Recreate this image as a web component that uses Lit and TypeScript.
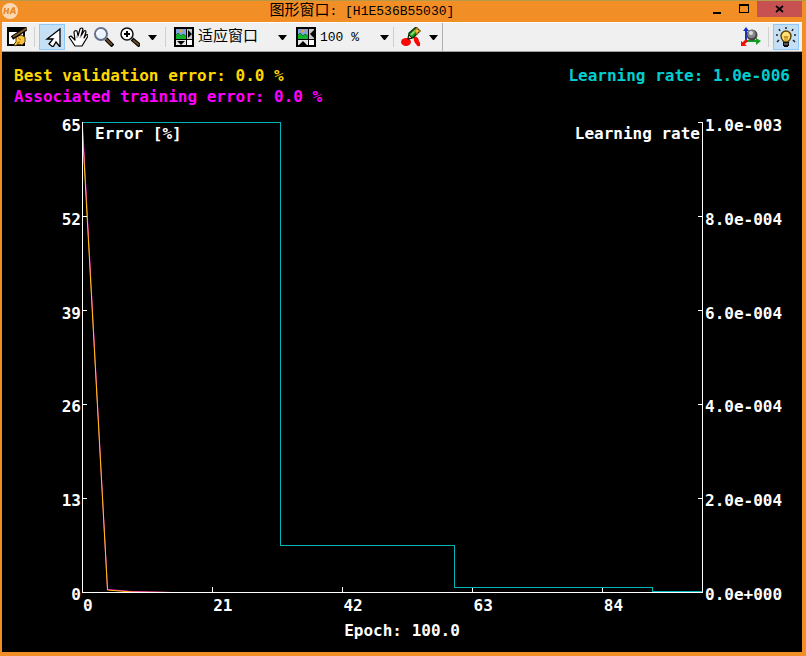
import { LitElement, html, svg, css } from "lit";
import { customElement, state } from "lit/decorators.js";

const errorTicks = ["65", "52", "39", "26", "13", "0"];
const rateTicks = ["1.0e-003", "8.0e-004", "6.0e-004", "4.0e-004", "2.0e-004", "0.0e+000"];
const epochTicks = ["0", "21", "42", "63", "84"];

const logo = svg`
  <circle cx="8" cy="8" r="8" fill="#f9d9b4"/>
  <path d="M3 5l-1 6M6.500 5l-1 6M2.500 8h3.500M8 11l3-6h1l1 6M9.500 9h3" fill="none" stroke="#ea8a2c" stroke-width="1.700"/>`;

const editIcon = svg`
  <rect width="18" height="19" fill="#000"/>
  <rect x="2" y="5" width="14" height="12" fill="#fff"/>
  <path d="M9 10l5-2 4 2v5l-3 3-4-1-3 2-1-2 2-2z" fill="#f8c440" stroke="#5a3c08" stroke-width="1"/>
  <path d="M11 11l3 2M10 16l3-1" stroke="#a86a10" fill="none"/>
  <path d="M20 1L5 11" stroke="#000" stroke-width="4"/>
  <path d="M20 1L6 10" stroke="#80582c" stroke-width="2"/>`;

const pointerIcon = svg`
  <path d="M18 2L5 12h6l-4 5 4 3 3-5 4 5z" fill="#fff" stroke="#000" stroke-width="1.300"/>`;

const handIcon = svg`
  <path d="M1 10l2-1 4 4-1-8q1-2 3-1l1 5 2-7q2-2 3 0l-2 7 3-5q2-1 2 1l-2 6 2-3q2-1 2 1l-3 5-3 5H7l-2-3z"
    fill="#fff" stroke="#000" stroke-width="1.200" stroke-linejoin="round"/>
  <path d="M9 11V8M12 11l1-3" stroke="#888" fill="none"/>`;

const lensIcon = svg`
  <path d="M12 12l7 7" stroke="#000" stroke-width="4"/>
  <path d="M12 12l6 6" stroke="#6a4a22" stroke-width="2"/>
  <circle cx="7" cy="7" r="6" fill="#eaf4fc" stroke="#66728c" stroke-width="2"/>
  <path d="M3 7q0-4 4-4" stroke="#fff" fill="none" stroke-width="1.500"/>`;

const lensPlusIcon = svg`
  <path d="M12 12l8 7" stroke="#000" stroke-width="4"/>
  <path d="M13 13l6 5" stroke="#6a4a22" stroke-width="2"/>
  <circle cx="7" cy="7" r="6" fill="#fff" stroke="#111" stroke-width="1.500"/>
  <path d="M4 7h6M7 4v6" stroke="#000" stroke-width="2"/>`;

const picture = svg`
  <rect width="20" height="20" fill="#000"/>
  <rect x="2" y="2" width="10" height="10" fill="#7fa3dc"/>
  <rect x="13" y="2" width="5" height="10" fill="#c9c9c9"/>
  <rect x="2" y="13" width="10" height="5" fill="#e6e6e6"/>
  <rect x="13" y="13" width="5" height="5" fill="#fff"/>
  <circle cx="7" cy="4" r="1.600" fill="#f0a030"/>
  <path d="M2 8l2-2 3 3 2-2 3 2v3H2z" fill="#10b428"/>
  <path d="M2 8l2-2 3 3 2-2 3 2" stroke="#086018" stroke-width=".7" fill="none"/>`;

const fitIcon = svg`${picture}<path d="M14 3v8l4-4zM3 14h8l-4 4z" fill="#000"/>`;
const scaleIcon = svg`${picture}<path d="M18 3v8l-4-4zM3 18h8l-4-4z" fill="#000"/>`;

const paintIcon = svg`
  <ellipse cx="5" cy="15" rx="5" ry="4" fill="#fa0808"/>
  <path d="M13 10q4-1 5 4 2 2 1 5-3 1-4-2-3-3-2-7z" fill="#fa0808"/>
  <path d="M7 12l1-6 7-6 4 4-7 7z" fill="#168a20" stroke="#0a2a08" stroke-width="1.200"/>
  <path d="M10 8l5-5" stroke="#8ae060" stroke-width="2"/>
  <path d="M7 12l1-4 3 3z" fill="#f0d8a0" stroke="#000" stroke-width=".8"/>
  <path d="M16 0l1 3 3 1-3 1-1 3-1-3-2-1 2-1z" fill="#ffc040" stroke="#b06808" stroke-width=".5"/>`;

const axesIcon = svg`
  <path d="M5 14V2" stroke="#1430c8" stroke-width="2"/>
  <path d="M2 4l3-4 3 4z" fill="#1430c8"/>
  <path d="M5 14h11" stroke="#10a020" stroke-width="2"/>
  <path d="M15 11l5 3-5 4z" fill="#10a020"/>
  <path d="M6 13l-4 4" stroke="#f01010" stroke-width="3"/>
  <path d="M0 14l6 5H0z" fill="#f01010"/>
  <circle cx="11" cy="8" r="5.500" fill="#484848"/>
  <circle cx="10.500" cy="7" r="4" fill="#888"/>
  <circle cx="10" cy="6" r="2" fill="#ddd"/>`;

const bulbIcon = svg`
  <path d="M10 0v2M3 2l1 2M17 2l-1 2M0 8h2M18 8h2M1 15l2-2M19 15l-2-2" stroke="#222" stroke-width="1.500"/>
  <path d="M10 4a5 5 0 0 0-5 5q0 3 3 6h4q3-3 3-6a5 5 0 0 0-5-5z" fill="#ffe070" stroke="#5a4208" stroke-width="1.500"/>
  <path d="M8 9l1 2 1-2 1 2 1-2M9 11v3M11 11v3" stroke="#c08010" fill="none"/>
  <rect x="7" y="15" width="6" height="4" fill="#111"/>
  <path d="M8 19.500h4" stroke="#111"/>
  <path d="M8 17h4" stroke="#999"/>`;

const icon = (shape: unknown) =>
  html`<svg class="icon" viewBox="0 0 20 20" aria-hidden="true">${shape}</svg>`;
const arrow = html`<svg class="arrow" viewBox="0 0 9 5" aria-hidden="true"><path d="M0 0h9L5 5H4z"/></svg>`;

@customElement("training-chart")
export class TrainingChart extends LitElement {
  static styles = css`
    :host {
      display: flex;
      flex-direction: column;
      background: #000;
      color: #fff;
      font: bold 16px/21px "DejaVu Sans Mono", monospace;
      padding: 13px 0 9px;
      box-sizing: border-box;
      white-space: nowrap;
    }
    .summary {
      display: flex;
      justify-content: space-between;
      padding: 0 12px;
    }
    .summary p, .epoch { margin: 0; }
    .best { color: #ffd700; }
    .training { color: #f0f; }
    .rate { color: #00ced1; }
    .chart {
      flex: 1;
      min-height: 0;
      display: grid;
      grid-template-columns: 80px 1fr 99px;
      grid-template-rows: 1fr 25px;
      margin-top: 15px;
    }
    .scale {
      display: flex;
      flex-direction: column;
      justify-content: space-between;
      margin: -7px 0 -12px;
    }
    .left { text-align: right; padding-right: 1px; }
    .right { padding-left: 2px; }
    .plot, .names { grid-area: 1 / 2; }
    .plot { width: 100%; height: 100%; min-height: 0; display: block; }
    .plot path {
      fill: none;
      stroke-width: 1px;
      vector-effect: non-scaling-stroke;
    }
    .axis { stroke: #fff; shape-rendering: crispEdges; }
    .step { stroke: #00b4b8; shape-rendering: crispEdges; }
    .validation { stroke: #ffc800; }
    .train { stroke: #f0f; }
    .names {
      display: flex;
      justify-content: space-between;
      padding: 1px 3px 0 13px;
    }
    .epochs {
      grid-area: 2 / 2;
      display: grid;
      grid-template-columns: 21fr 21fr 21fr 21fr 16fr;
      line-height: 26px;
      padding-left: 1px;
    }
    .epoch { text-align: center; line-height: 25px; }
  `;

  render() {
    const yTicks = [0, 94, 188, 282, 376];
    const left = yTicks.map((y) => `M0 ${y + 0.5}h5`).join("");
    const right = yTicks.map((y) => `M621 ${y + 0.5}h-5`).join("");
    const bottom = [130, 260, 390, 520].map((x) => `M${x + 0.5} 471v-6`).join("");
    return html`
      <div class="summary">
        <div>
          <p class="best">Best validation error: 0.0 %</p>
          <p class="training">Associated training error: 0.0 %</p>
        </div>
        <p class="rate">Learning rate: 1.0e-006</p>
      </div>
      <div class="chart">
        <div class="scale left">${errorTicks.map((t) => html`<span>${t}</span>`)}</div>
        <svg class="plot" viewBox="0 0 621 471" preserveAspectRatio="none" role="img" aria-label="Error and learning rate per epoch">
          <path class="train" d="M.5 3L25.500 467.500L50 469.500L90 470.500"/>
          <path class="validation" d="M.5 10L25.500 468L50 470L90 470.500"/>
          <path class="axis" d="M.5 0V470.500H620.500V0${left}${right}${bottom}"/>
          <path class="step" d="M.5 .5H198.500V423.500H372.500V465.500H570.500V469.500H620"/>
        </svg>
        <div class="names"><span>Error [%]</span><span>Learning rate</span></div>
        <div class="scale right">${rateTicks.map((t) => html`<span>${t}</span>`)}</div>
        <div class="epochs">${epochTicks.map((t) => html`<span>${t}</span>`)}</div>
      </div>
      <p class="epoch">Epoch: 100.0</p>
    `;
  }
}

@customElement("app-root")
export class AppRoot extends LitElement {
  static styles = css`
    :host {
      display: flex;
      flex-direction: column;
      height: 100vh;
      box-sizing: border-box;
      border-top: 1px solid #b59a4c;
      background: #f28e26;
      padding: 0 4px 4px 2px;
      font: 15px/20px "Liberation Mono", "Noto Sans CJK SC", monospace;
      color: #000;
    }
    button {
      border: 0;
      padding: 0;
      margin: 0;
      background: none;
      display: flex;
      align-items: center;
      justify-content: center;
    }
    .titlebar {
      display: grid;
      grid-template-columns: 10fr auto 13fr;
      height: 21px;
      flex: none;
    }
    .logo { width: 16px; height: 16px; margin-top: 2px; }
    .title { margin: 0; font-size: 15px; line-height: 22px; font-weight: 400; white-space: pre; }
    .latin { font-size: 13px; }
    .controls { display: flex; justify-content: flex-end; align-items: flex-start; }
    .controls button { width: 27px; height: 16px; }
    .controls .close { width: 45px; background: #c75050; }
    .glyph { width: 10px; height: 10px; display: block; }
    .toolbar {
      display: flex;
      align-items: center;
      height: 30px;
      flex: none;
      box-sizing: border-box;
      background: #f0f0f0;
      border-top: 1px solid #fff;
      border-bottom: 1px solid #a0a0a0;
      padding: 0 3px 0 2px;
    }
    .tool { width: 26px; height: 26px; flex: none; }
    .on {
      box-sizing: border-box;
      background: #c5e0f5;
      border: 1px solid #90c8f6;
    }
    .drop { width: 18px; height: 26px; flex: none; }
    .icon { width: 20px; height: 20px; flex: none; display: block; }
    .arrow { width: 9px; height: 5px; flex: none; display: block; }
    .sep { width: 1px; height: 20px; background: #d0d0d0; margin: 0 4px; flex: none; }
    .edge { width: 1px; align-self: stretch; background: #b0b0b0; }
    .combos { display: flex; gap: 9px; padding-left: 4px; }
    .combo { display: flex; align-items: center; gap: 4px; }
    .field { display: grid; align-items: center; }
    .field select, .field .arrow { grid-area: 1 / 1; }
    .field .arrow { justify-self: end; pointer-events: none; }
    select {
      appearance: none;
      border: 0;
      border-radius: 0;
      background: none;
      box-sizing: border-box;
      padding: 2px 0 0;
      margin: 0;
      color: #000;
      height: 26px;
      font: 15px/24px "Liberation Mono", "Noto Sans CJK SC", monospace;
    }
    .fit { width: 89px; }
    .zoom { width: 69px; }
    .zoom select { font-size: 13px; }
    .spacer { flex: 1; }
    training-chart { flex: 1; min-height: 0; }
  `;

  @state() private light = true;

  render() {
    return html`
      <header class="titlebar">
        <svg class="logo" viewBox="0 0 16 16" aria-hidden="true">${logo}</svg>
        <h1 class="title">图形窗口<span class="latin">: [H1E536B55030]</span></h1>
        <div class="controls">
          <button aria-label="Minimize"><svg class="glyph" viewBox="0 0 10 10"><path d="M1 8h8v2H1z"/></svg></button>
          <button aria-label="Maximize"><svg class="glyph" viewBox="0 0 10 10"><path d="M0 0h10v9H0zM1 2v6h8V2z" fill-rule="evenodd"/></svg></button>
          <button class="close" aria-label="Close"><svg class="glyph" viewBox="0 0 10 10"><path d="M1 2l7 6M8 2L1 8" stroke="#000" stroke-width="1.700"/></svg></button>
        </div>
      </header>
      <nav class="toolbar" aria-label="Tools">
        <button class="tool" aria-label="Clear">${icon(editIcon)}</button>
        <i class="sep"></i>
        <button class="tool on" aria-label="Select">${icon(pointerIcon)}</button>
        <button class="tool" aria-label="Pan">${icon(handIcon)}</button>
        <button class="tool" aria-label="Magnify">${icon(lensIcon)}</button>
        <button class="tool" aria-label="Zoom in">${icon(lensPlusIcon)}</button>
        <button class="drop" aria-label="Zoom options">${arrow}</button>
        <i class="sep"></i>
        <div class="combos">
          <label class="combo">
            ${icon(fitIcon)}
            <span class="field fit"><select aria-label="Window size"><option>适应窗口</option></select>${arrow}</span>
          </label>
          <label class="combo">
            ${icon(scaleIcon)}
            <span class="field zoom"><select aria-label="Zoom level"><option>100 %</option></select>${arrow}</span>
          </label>
        </div>
        <i class="sep"></i>
        <button class="tool" aria-label="Colors">${icon(paintIcon)}</button>
        <button class="drop" aria-label="Color options">${arrow}</button>
        <i class="edge"></i>
        <span class="spacer"></span>
        <button class="tool" aria-label="3D view">${icon(axesIcon)}</button>
        <i class="sep"></i>
        <button class="tool ${this.light ? "on" : ""}" aria-label="Light" @click=${() => (this.light = !this.light)}>${icon(bulbIcon)}</button>
      </nav>
      <training-chart></training-chart>
    `;
  }
}
